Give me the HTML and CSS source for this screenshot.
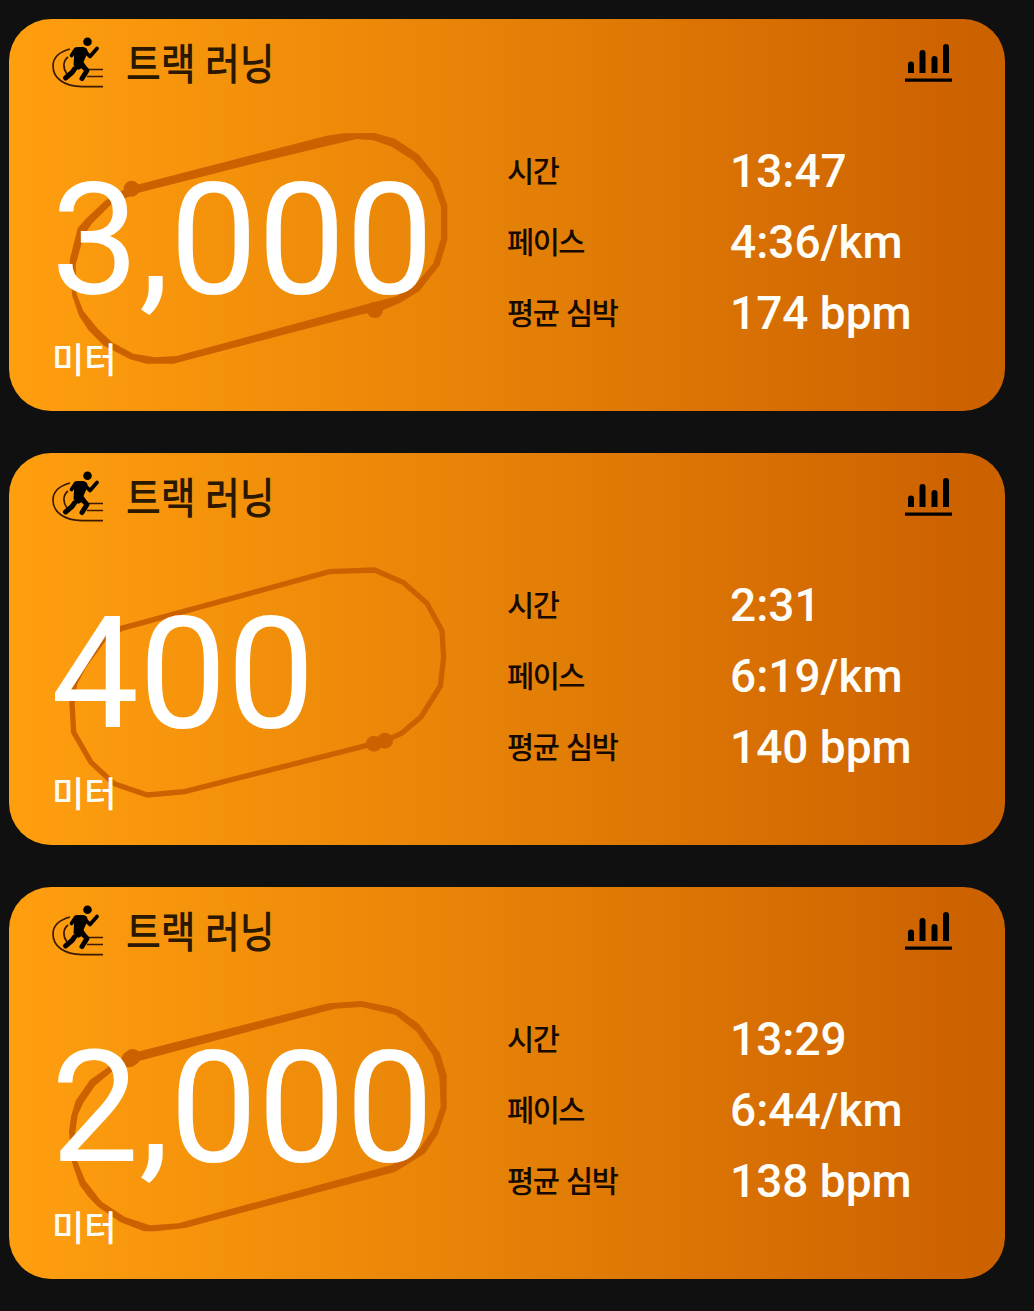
FILE: index.html
```html
<!DOCTYPE html>
<html lang="ko">
<head>
<meta charset="utf-8">
<title>트랙 러닝</title>
<link rel="stylesheet" href="styles.css">
</head>
<body>
<svg class="defs" width="0" height="0" aria-hidden="true">
  <symbol id="runner" viewBox="0 0 56 56">
    <g fill="none" stroke="#3a1a00" stroke-width="1.700">
      <path d="M21 14C10 17 4 23 4 31C4 43 15 51.600 33 51.600H54"/>
      <path d="M19 22C14 26 13.500 33 18 39M40 34.500H54M38 41.500H54"/>
    </g>
    <g fill="none" stroke="#000" stroke-linecap="round" stroke-linejoin="round">
      <path stroke-width="3.800" d="M22.500 20.500L26.500 14.500L34 14"/>
      <path stroke-width="3.800" d="M35 15.500L41 21.500L48 13.500"/>
      <path stroke-width="5" d="M32 29L38 35.500L33 43.500M25.500 34L23 37.500L16.500 43"/>
    </g>
    <path d="M25.500 13Q31 11 37 13Q39.500 15 38 19L34.500 27L37 31L29 35L24.500 30Z"/>
    <circle cx="38.500" cy="6.800" r="4.300"/>
  </symbol>
  <symbol id="bars" viewBox="0 0 48 40">
    <path d="M3 30V21.500a3 3 0 0 1 6 0V30ZM14.500 30V10a3 3 0 0 1 6 0V30ZM26.500 30V16a3 3 0 0 1 6 0V30ZM38 30V4a3 3 0 0 1 6 0V30ZM0 35.500H47V38.800H0Z"/>
  </symbol>
</svg>
<main class="list">
  <article class="card">
    <header class="head"><svg class="runner"><use href="#runner"/></svg><h2 class="title">트랙 러닝</h2><svg class="bars"><use href="#bars"/></svg></header>
    <svg class="track" viewBox="0 0 1290 810"><g transform="translate(0 9)">
      <path class="fill" d="M262 202L450 153L860 47L910 40L1003 39L1065 56L1137 104L1195 178L1222 255V360L1199 436L1138 513L1080 549L1030 570L960 584L400 731H320L270 718L190 676L145 630L117 587L96 525L89 420L113 325L137 297L195 242L250 210ZM290 220L270 229L215 252L155 311L130 350L107 435L109 520L130 573L174 627L215 666L280 701L345 712L410 708L990 550L1065 530L1125 495L1180 430L1203 355V260L1177 188L1122 123L1055 80L1000 61L950 57L660 126Z"/>
      <circle class="fill" cx="275" cy="206" r="24"/><circle class="fill" cx="1005" cy="570" r="24"/></g></svg>
    <div class="body">
      <div class="distance"><div class="number">3,000</div><div class="unit">미터</div></div>
      <dl class="stats"><dt>시간</dt><dd>13:47</dd><dt>페이스</dt><dd>4:36/km</dd><dt>평균 심박</dt><dd>174 bpm</dd></dl>
    </div>
  </article>
  <article class="card">
    <header class="head"><svg class="runner"><use href="#runner"/></svg><h2 class="title">트랙 러닝</h2><svg class="bars"><use href="#bars"/></svg></header>
    <svg class="track" viewBox="0 0 1290 810"><g transform="translate(0 -3)">
      <path class="line" d="M1035 572L1085 550L1143 501L1201 408L1211 323L1206 242L1161 160L1091 98L1003 60L868 65L245 235L190 268L130 350L104 400L96 460L101 547L153 637L222 701L322 735L434 725L1002 581"/>
      <circle class="fill" cx="1002" cy="581" r="24"/><circle class="fill" cx="1035" cy="572" r="24"/></g></svg>
    <div class="body">
      <div class="distance"><div class="number">400</div><div class="unit">미터</div></div>
      <dl class="stats"><dt>시간</dt><dd>2:31</dd><dt>페이스</dt><dd>6:19/km</dd><dt>평균 심박</dt><dd>140 bpm</dd></dl>
    </div>
  </article>
  <article class="card">
    <header class="head"><svg class="runner"><use href="#runner"/></svg><h2 class="title">트랙 러닝</h2><svg class="bars"><use href="#bars"/></svg></header>
    <svg class="track" viewBox="0 0 1290 810">
      <path class="fill" d="M280 203L865 55L965 48L1050 65L1078 75L1138 118L1200 205L1220 270V370L1193 448L1155 505L1065 561L435 729L347 739H312L240 711L172 664L145 635L119 600L97 535L87 440L93 395L107 347L150 285L205 246L255 220ZM300 227L255 246L215 260L165 302L130 353L113 390L105 450L112 530L136 587L185 650L255 696L330 721L415 715L1055 540L1140 490L1180 430L1202 365L1198 275L1178 210L1130 140L1065 89L965 66L885 71Z"/>
      <circle class="fill" cx="278" cy="216" r="24"/><circle class="fill" cx="268" cy="223" r="24"/></svg>
    <div class="body">
      <div class="distance"><div class="number">2,000</div><div class="unit">미터</div></div>
      <dl class="stats"><dt>시간</dt><dd>13:29</dd><dt>페이스</dt><dd>6:44/km</dd><dt>평균 심박</dt><dd>138 bpm</dd></dl>
    </div>
  </article>
</main>
</body>
</html>
```
FILE: styles.css
```css
* { box-sizing: border-box; }
body { margin: 0; background: #101010; font-family: Roboto, "Noto Sans CJK KR", sans-serif; }
.defs { display: block; }
.list { display: flex; flex-direction: column; gap: 42px; padding: 19px 29px 32px 9px; }
.card {
  position: relative;
  height: 392px;
  border-radius: 42px;
  overflow: hidden;
  padding: 16px 53px 0 42px;
  background: linear-gradient(90deg, #ff9f0f, #e68207 48%, #cc6100 97%);
}
.head { display: flex; height: 56px; align-items: flex-start; }
.runner { width: 56px; height: 56px; margin-left: -2px; }
.title {
  margin: 2px 0 0 21px;
  font-size: 43px;
  line-height: 56px;
  font-weight: 500;
  color: #2a1800;
  white-space: nowrap;
  transform: scaleX(.88);
  transform-origin: left;
}
.bars { width: 48px; height: 40px; margin: 8px -1px 0 auto; }
.track { position: absolute; left: 31px; top: 98px; width: 430px; height: 270px; }
.fill { fill: #cc6100; }
.line { fill: none; stroke: #cc6100; stroke-width: 16; }
.body { position: relative; display: flex; }
.distance { width: 456px; padding-top: 57px; }
.number { font-size: 156.5px; line-height: 184px; color: #fff; white-space: nowrap; }
.unit {
  margin: 10px 0 0 1px;
  font-size: 35px;
  line-height: 40px;
  font-weight: 500;
  color: #fffdf5;
}
.stats { display: grid; grid-template-columns: 223px auto; grid-auto-rows: 71px; margin: 45px 0 0; }
.stats dt { padding-top: 1px; font-size: 29.5px; line-height: 71px; font-weight: 500; letter-spacing: -1.5px; word-spacing: 2px; color: #160900; white-space: nowrap; }
.stats dd { margin: 0; font-size: 46px; line-height: 71px; font-weight: 500; color: #fffdf8; white-space: nowrap; }
```
